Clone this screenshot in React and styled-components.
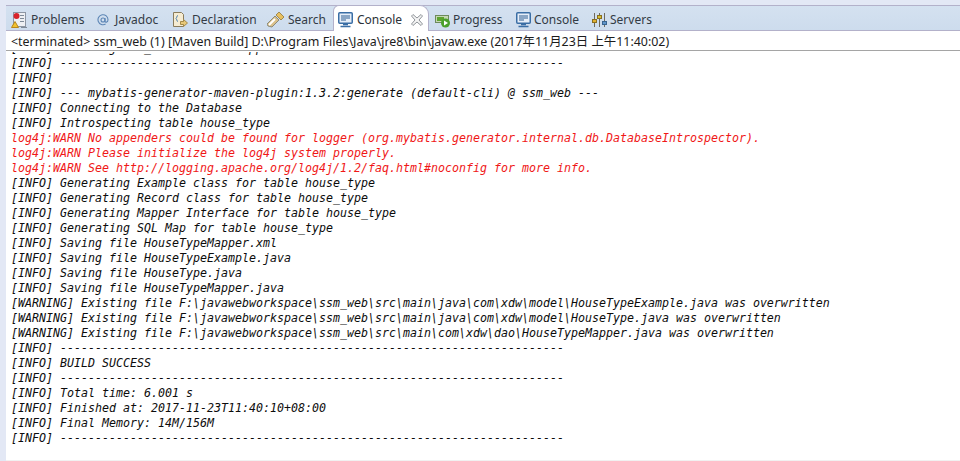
import React from 'react'
import styled, { createGlobalStyle } from 'styled-components'

const GlobalStyle = createGlobalStyle`
  html, body {
    margin: 0;
    padding: 0;
    background: #fff;
    overflow: hidden;
  }
`

const View = styled.div`
  width: 960px;
  height: 461px;
  box-sizing: border-box;
  display: flex;
  flex-direction: column;
  overflow: hidden;
  background: #e3e8f5;
  padding: 5px 0 0 6px;
`

const TabBar = styled.div`
  height: 26px;
  flex: none;
  box-sizing: border-box;
  display: flex;
  align-items: stretch;
  padding-left: 1px;
  border-top: 1px solid #b3b1ca;
  border-bottom: 1px solid #b3b1ca;
  background: linear-gradient(#d4e1f0, #cddced);
`

const Tab = styled.div`
  display: flex;
  align-items: center;
  gap: ${p => p.$gap}px;
  width: ${p => p.$w}px;
  box-sizing: border-box;
  padding: 3px 0 0 4px;
  font: 12px 'Noto Sans', Tahoma, sans-serif;
  color: #333b45;
  white-space: nowrap;
  ${p =>
    p.$active &&
    `
    background: #fff;
    color: #2b3138;
    height: 26px;
    margin: -1px 2px -1px 0;
    padding-top: 2px;
    border: 1px solid #b3b1ca;
    border-bottom: 0;
    border-radius: 6px 9px 0 0;
  `}
`

const CloseWrap = styled.span`
  display: flex;
  margin-left: 5px;
`

const Status = styled.div`
  height: 20px;
  flex: none;
  box-sizing: border-box;
  display: flex;
  align-items: center;
  padding-left: 5px;
  background: #fff;
  border-bottom: 1px solid #a5a5a5;
  font: 12.42px 'Noto Sans', 'Noto Sans CJK SC', sans-serif;
  color: #1c1c1c;
  white-space: nowrap;
`

const Output = styled.div`
  flex: 1;
  background: #fff;
  overflow: hidden;
  padding-left: 5px;
  border-bottom: 1px solid #f1f1f1;
  font: italic 11.63px/15px 'DejaVu Sans Mono', monospace;
`

const Line = styled.div`
  height: 15px;
  white-space: pre;
  color: ${p => (p.$err ? '#f01818' : '#0c0c0c')};
  &:first-child {
    margin-top: -10px;
    clip-path: inset(11px 0 0 0);
  }
`

const ProblemsIcon = () => (
  <svg width="16" height="16" viewBox="0 0 16 16">
    <rect x="2.500" y="0.500" width="12" height="14" fill="#eef0f3" stroke="#8d96a3" />
    <circle cx="5.500" cy="4" r="3" fill="#d8232a" />
    <path d="M0.500 15.500l3.500-6 3.500 6z" fill="#f2c230" stroke="#b8861b" />
    <path d="M9 3.500h4M9 6.500h4M9 9.500h4M10 15.500h6" stroke="#7f8b98" />
  </svg>
)

const AtIcon = () => (
  <svg width="14" height="14" viewBox="0 0 14 14" fill="none" stroke="#5d86b5" strokeWidth="1.100">
    <circle cx="6" cy="7" r="2" />
    <path d="M8 5v3.200c0 1.600 3 1.400 3-1.400A5 5 0 1 0 8.600 11" />
  </svg>
)

const DeclarationIcon = () => (
  <svg width="16" height="16" viewBox="0 0 16 16" fill="none">
    <path d="M1.500 0.500h8l2 2v12h-10z" fill="#f6ecd2" stroke="#8a7c5c" />
    <path d="M6 3.500c-1.500 0-1 2.500-2 3 1 .5.500 3 2 3" stroke="#4a7fae" />
    <path d="M8.500 9.500h3v-2l4 3.500-4 3.500v-2h-3z" fill="#e8c878" stroke="#a58a4a" />
  </svg>
)

const SearchIcon = () => (
  <svg width="17" height="16" viewBox="0 0 17 16">
    <path d="M8 4l4 4-7 7-4-1-1-2z" fill="#d9c08a" stroke="#8b8b7a" />
    <path d="M9 3l3-3 5 5-3 3z" fill="#e8c060" stroke="#a08a50" />
    <path d="M2 13l6-6" stroke="#fff" strokeWidth="2" />
  </svg>
)

const ConsoleIcon = () => (
  <svg width="15" height="16" viewBox="0 0 15 16">
    <rect x="0.750" y="0.750" width="13.500" height="10.500" rx="1" fill="#e6eef8" stroke="#3a6ea5" strokeWidth="1.500" />
    <path d="M3 4h9M3 6h9M3 8h5" stroke="#2f5f92" />
    <path d="M5 12.500h5M2.500 14.500h10" stroke="#3a6ea5" strokeWidth="1.500" />
  </svg>
)

const ProgressIcon = () => (
  <svg width="15" height="16" viewBox="0 0 15 16">
    <rect x="0.500" y="3.500" width="13" height="7" fill="#c6d8b4" stroke="#6d8a5c" />
    <rect x="2" y="5" width="7" height="4" fill="#5da32f" />
    <circle cx="10.500" cy="11" r="4.500" fill="#4aa02c" />
    <path d="M9 8.500l4 2.500-4 2.500z" fill="#fff" />
  </svg>
)

const ServersIcon = () => (
  <svg width="15" height="16" viewBox="0 0 15 16" fill="none">
    <path d="M2.500 1v14M7.500 1v14M12.500 1v14" stroke="#6f6a5c" />
    <rect x="0.500" y="7.500" width="4" height="3" fill="#e0b030" stroke="#8a6f20" />
    <rect x="5.500" y="3.500" width="4" height="3" fill="#d8c030" stroke="#8a6f20" />
    <rect x="10.500" y="9.500" width="4" height="3" fill="#5f94c8" stroke="#3a6590" />
  </svg>
)

const CloseIcon = () => (
  <svg width="12" height="12" viewBox="0 0 12 12">
    <path
      d="M0.500 2L2 .5l4 3.500L10 .5 11.500 2 8 6l3.500 4L10 11.500 6 8l-4 3.500L.5 10 4 6z"
      fill="#f4f4f4"
      stroke="#8f9499"
    />
  </svg>
)

const tabs = [
  { label: 'Problems', w: 86, gap: 4, Icon: ProblemsIcon },
  { label: 'Javadoc', w: 75, gap: 4, Icon: AtIcon },
  { label: 'Declaration', w: 95, gap: 4, Icon: DeclarationIcon },
  { label: 'Search', w: 70, gap: 4, Icon: SearchIcon },
  { label: 'Console', w: 96, gap: 4, Icon: ConsoleIcon, active: true },
  { label: 'Progress', w: 81, gap: 3, Icon: ProgressIcon },
  { label: 'Console', w: 76, gap: 3, Icon: ConsoleIcon },
  { label: 'Servers', w: 80, gap: 3, Icon: ServersIcon },
]

const dashes = '[INFO] ' + '-'.repeat(72)

const lines = [
  ['[INFO] Building ssm_web Maven Webapp 0.0.1-SNAPSHOT'],
  [dashes],
  ['[INFO] '],
  ['[INFO] --- mybatis-generator-maven-plugin:1.3.2:generate (default-cli) @ ssm_web ---'],
  ['[INFO] Connecting to the Database'],
  ['[INFO] Introspecting table house_type'],
  ['log4j:WARN No appenders could be found for logger (org.mybatis.generator.internal.db.DatabaseIntrospector).', true],
  ['log4j:WARN Please initialize the log4j system properly.', true],
  ['log4j:WARN See http://logging.apache.org/log4j/1.2/faq.html#noconfig for more info.', true],
  ['[INFO] Generating Example class for table house_type'],
  ['[INFO] Generating Record class for table house_type'],
  ['[INFO] Generating Mapper Interface for table house_type'],
  ['[INFO] Generating SQL Map for table house_type'],
  ['[INFO] Saving file HouseTypeMapper.xml'],
  ['[INFO] Saving file HouseTypeExample.java'],
  ['[INFO] Saving file HouseType.java'],
  ['[INFO] Saving file HouseTypeMapper.java'],
  ['[WARNING] Existing file F:\\javawebworkspace\\ssm_web\\src\\main\\java\\com\\xdw\\model\\HouseTypeExample.java was overwritten'],
  ['[WARNING] Existing file F:\\javawebworkspace\\ssm_web\\src\\main\\java\\com\\xdw\\model\\HouseType.java was overwritten'],
  ['[WARNING] Existing file F:\\javawebworkspace\\ssm_web\\src\\main\\com\\xdw\\dao\\HouseTypeMapper.java was overwritten'],
  [dashes],
  ['[INFO] BUILD SUCCESS'],
  [dashes],
  ['[INFO] Total time: 6.001 s'],
  ['[INFO] Finished at: 2017-11-23T11:40:10+08:00'],
  ['[INFO] Final Memory: 14M/156M'],
  [dashes],
]

export default function App() {
  return (
    <View>
      <GlobalStyle />
      <TabBar>
        {tabs.map(({ label, w, gap, Icon, active }, i) => (
          <Tab key={i} $w={w} $gap={gap} $active={active}>
            <Icon />
            {label}
            {active && (
              <CloseWrap>
                <CloseIcon />
              </CloseWrap>
            )}
          </Tab>
        ))}
      </TabBar>
      <Status>
        {'<terminated> ssm_web (1) [Maven Build] D:\\Program Files\\Java\\jre8\\bin\\javaw.exe (2017年11月23日 上午11:40:02)'}
      </Status>
      <Output>
        {lines.map(([text, err], i) => (
          <Line key={i} $err={err}>
            {text}
          </Line>
        ))}
      </Output>
    </View>
  )
}
